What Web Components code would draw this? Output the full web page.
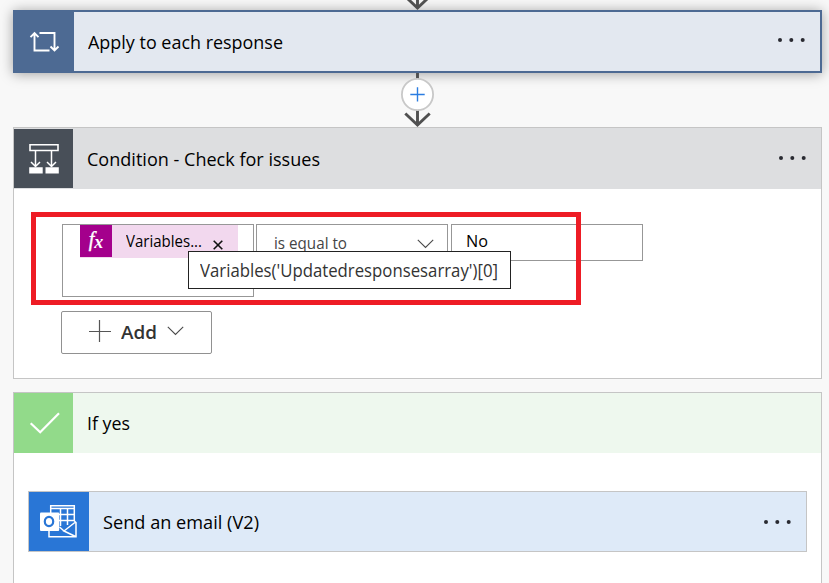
<!DOCTYPE html>
<html lang="en">
<head>
<meta charset="utf-8">
<title>Flow designer</title>
<style>
html,body{margin:0;height:100%;overflow:hidden;background:#f8f8f8}
body{font-family:"Open Sans","Noto Sans",sans-serif;color:#000}
</style>
</head>
<body>
<flow-canvas></flow-canvas>
<script>
function define(name, html, setup) {
  customElements.define(name, class extends HTMLElement {
    connectedCallback() {
      if (this.shadowRoot) return;
      const t = document.createElement('template');
      t.innerHTML = html;
      this.attachShadow({mode: 'open'}).append(t.content.cloneNode(true));
      if (setup) setup.call(this, this.shadowRoot);
    }
  });
}

// One line of text condensed to a given advance width.
define('fit-text', `
<style>
:host{display:block;flex:none;white-space:nowrap;line-height:26px;height:26px}
span{display:inline-block;transform-origin:0 50%}
</style><span><slot></slot></span>`, function (root) {
  const w = +this.getAttribute('width');
  const s = root.querySelector('span');
  this.style.width = w + 'px';
  s.style.transform = 'scaleX(' + w / s.getBoundingClientRect().width + ')';
});

const icons = {
  loop: `<svg width="32" height="24" viewBox="0 0 32 24" fill="none" stroke="#fff" stroke-width="1.9"><path d="M5.5 3.5V20.5H20.5M10.5 3H25.5V20M1.5 7.2L5.5 3.2L9.5 7.2M21.5 16.5L25.5 20.5L29.5 16.5"/></svg>`,
  condition: `<svg width="32" height="32" viewBox="0 0 32 32" fill="none" stroke="#fff" stroke-width="1.5"><path d="M2 1.8H30V7.5H2Z" stroke-width="1.6"/><path d="M7.5 8V23.5M23.5 8V23.5M3 19L7.5 23.5L12 19M19 19L23.5 23.5L28 19"/><path d="M1.2 24.2H14.7V30.4H1.2ZM17.5 24.2H30.8V30.4H17.5Z" fill="#fff" stroke="none"/></svg>`,
  check: `<svg width="32" height="24" viewBox="0 0 32 24" fill="none" stroke="#fff" stroke-width="2.2"><path d="M2.7 12.2L12.2 21.3L31 2.2"/></svg>`,
  outlook: `<svg width="38" height="34" viewBox="1 1 38 34" fill="none" stroke="#fff" stroke-width="1.5"><path d="M11.7 9V1.7H35.3V17M11.5 4.5H35.5" /><path d="M20 10.5H35M20 16.5H35M21.5 5V22M28.5 5V21M35.3 17L37 18.5V32.8H10V26M36.5 18L25 27L36.5 32.5M20.5 23L25 27"/><path d="M1 9.5Q1 8.5 2 8.5H19.2Q20.2 8.5 20.2 9.5V26Q20.2 27 19.2 27H2Q1 27 1 26Z" fill="#fff" stroke="none"/><ellipse cx="10" cy="17.5" rx="4.2" ry="4.6" stroke="#2976d6" stroke-width="2.2"/></svg>`
};
define('flow-icon', `<style>:host{display:flex;align-items:center;justify-content:center;flex:none}svg{display:block;overflow:visible}</style>`,
  function (root) { root.innerHTML += icons[this.getAttribute('name')]; });

define('more-dots', `<style>:host{display:block;flex:none}svg{display:block}</style><svg width="27" height="4" viewBox="0 0 27 4" fill="#292a31"><circle cx="2" cy="2" r="2"/><circle cx="13.3" cy="2" r="2"/><circle cx="24.7" cy="2" r="2"/></svg>`);

define('card-header', `
<style>
:host{display:flex;align-items:center;box-sizing:border-box;font-size:18.8px}
flow-icon{width:var(--tile-w,59px);height:var(--tile-h,100%);background:var(--tile)}
fit-text{margin-left:14px;margin-top:var(--text-y,0px)}
more-dots{margin-left:auto;margin-right:var(--dots-r,15px);margin-top:var(--dots-y,0)}
</style>
<flow-icon></flow-icon><fit-text><slot></slot></fit-text><more-dots></more-dots>`, function (root) {
  const icon = document.createElement('flow-icon');
  icon.setAttribute('name', this.getAttribute('icon'));
  root.querySelector('flow-icon').replaceWith(icon);
  const text = document.createElement('fit-text');
  text.setAttribute('width', this.getAttribute('text-width'));
  text.append(document.createElement('slot'));
  root.querySelector('fit-text').replaceWith(text);
  if (this.hasAttribute('plain')) root.querySelector('more-dots').remove();
});

define('flow-connector', `
<style>:host{display:flex;justify-content:center;height:54px;position:relative}svg{display:block}</style>
<svg width="35" height="54" viewBox="0 0 35 54" fill="none"><path d="M17.5 0V52M5.3 40.5L17.5 52L29.7 40.5" stroke="#505050" stroke-width="2.9"/><circle cx="17.5" cy="21.5" r="15.6" fill="#fff" stroke="#c8c8c8" stroke-width="1.8"/><path d="M17.5 14.3V28.5M10.3 21.5H24.7" stroke="#2b7de1" stroke-width="1.4"/></svg>`);
define('flow-entry', `
<style>:host{display:flex;justify-content:center;height:10px}svg{display:block}</style>
<svg width="35" height="10" viewBox="0 0 35 10" fill="none"><path d="M17.5 0V8M5.3 -3.5L17.5 8L29.7 -3.5" stroke="#505050" stroke-width="2.9"/></svg>`);

define('chevron-down', `<style>:host{display:block;flex:none}svg{display:block}</style><svg width="17" height="10" viewBox="0 0 17 10" fill="none"><path d="M.8 .8L8.5 8.5L16.2 .8" stroke="#4a4a4a" stroke-width="1.1"/></svg>`);

define('expression-token', `
<style>
:host{display:flex;width:158px;height:33px;background:#f2d8ee;font-size:15.7px}
b{width:32px;height:32px;background:#a4008c;color:#fff;font:italic 20px/29px "Liberation Serif",serif;-webkit-text-stroke:.4px #fff;text-align:center;flex:none}
b span{display:inline-block;font-size:18px;font-weight:bold;transform:translateY(2px);-webkit-text-stroke:0}
fit-text{margin:3px 0 0 14px}
svg{display:block;margin:15px 0 0 10.5px}
</style>
<b>f<span>x</span></b><fit-text width="76"><slot></slot></fit-text><svg width="10" height="10" viewBox="0 0 10 10"><path d="M.7 .7L9.3 9.3M9.3 .7L.7 9.3" stroke="#111" stroke-width="1.6"/></svg>`);

define('input-box', `<style>:host{display:flex;box-sizing:border-box;width:192px;height:37px;border:1px solid #979797;background:#fff;font-size:15.7px}</style><slot></slot>`);

define('hover-tip', `
<style>:host{display:block;box-sizing:border-box;position:absolute;left:174px;top:62px;width:323px;height:38px;border:1px solid #222;background:#fff;color:#333;font-size:17.3px;padding:6px 0 0 11px;z-index:1}</style>
<fit-text width="298"><slot></slot></fit-text>`);

define('highlight-frame', `<style>:host{display:block;box-sizing:border-box;position:absolute;left:17px;top:23px;width:550px;height:93px;border:5px solid #ee1c25;z-index:2}</style>`);

define('add-button', `
<style>:host{display:flex;align-items:center;box-sizing:border-box;width:151px;height:43px;border:1px solid #919191;border-radius:2px;padding-left:27px;color:#333;font-size:18px;font-weight:600;background:#fff}svg{display:block;margin-top:-3px}fit-text{margin:-1px 0 0 10px}chevron-down{margin:-3px 0 0 10px}</style>
<svg width="22" height="22" viewBox="0 0 22 22"><path d="M10.5 0V22M0 11.5H22" stroke="#555" stroke-width="1.2"/></svg><fit-text width="36"><slot></slot></fit-text><chevron-down></chevron-down>`);

define('condition-body', `
<style>
:host{display:block;position:relative;height:189px;padding:35px 0 0 48px;box-sizing:border-box}
.row{display:flex;gap:2px;align-items:flex-start}
.left{height:73px;padding-left:17px}
.op{padding:5px 0 0 17px;color:#444}
.op chevron-down{margin:9px 0 0 70px}
.value{margin-left:1px;padding:3px 0 0 14px}
add-button{margin:14px 0 0 -1px}
</style>
<div class="row">
<input-box class="left"><expression-token>Variables...</expression-token></input-box>
<input-box class="op"><fit-text width="73">is equal to</fit-text><chevron-down></chevron-down></input-box>
<input-box class="value"><fit-text width="22">No</fit-text></input-box>
</div>
<add-button>Add</add-button>
<hover-tip>Variables('Updatedresponsesarray')[0]</hover-tip>
<highlight-frame></highlight-frame>`);

define('flow-card', `<style>:host{display:block;box-sizing:border-box;background:#fff;border:1px solid #c5c5c5}</style><slot></slot>`);

define('flow-canvas', `
<style>
:host{display:block;height:583px;overflow:hidden;padding:0 7px 0 13px;box-sizing:border-box}
.apply{height:63px;border:2px solid #4d6a93;background:#e3e8f0;box-shadow:0 1px 12px rgba(0,0,0,.36);--tile:#4d6a93;--tile-h:59px;--dots-y:-3px;--dots-r:15px}
.cond{height:252px}
.cond>card-header{height:61px;background:#dddee0;--tile:#484f58;--tile-h:59px;--dots-y:-1px}
.yes{height:205px;margin-top:13px}
.yes>card-header{height:60px;background:#eef8ee;--tile:#92da8a}
.mail{margin:38px 14px 0;height:61px}
.mail card-header{height:59px;background:#deeaf8;--tile:#2976d6;--tile-w:60px}
</style>
<flow-entry></flow-entry>
<card-header class="apply" icon="loop" text-width="195">Apply to each response</card-header>
<flow-connector></flow-connector>
<flow-card class="cond"><card-header icon="condition" text-width="233">Condition - Check for issues</card-header><condition-body></condition-body></flow-card>
<flow-card class="yes"><card-header icon="check" text-width="43" plain>If yes</card-header>
<flow-card class="mail"><card-header icon="outlook" text-width="156">Send an email (V2)</card-header></flow-card></flow-card>`);
</script>
</body>
</html>
